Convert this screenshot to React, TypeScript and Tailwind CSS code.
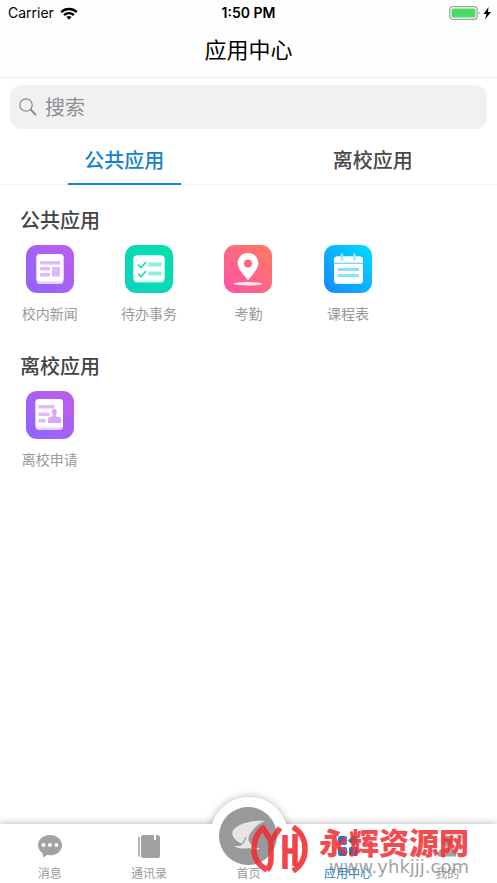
import { useState } from "react";
import type { ReactNode } from "react";

function Tile({ id, from, to, children }: { id: string; from: string; to: string; children: ReactNode }) {
  return (
    <svg viewBox="0 0 48 48" className="size-12" aria-hidden="true">
      <defs>
        <linearGradient id={id} x1="0" y1="1" x2="1" y2="0">
          <stop offset="0" stopColor={from} />
          <stop offset="1" stopColor={to} />
        </linearGradient>
      </defs>
      <rect width="48" height="48" rx="11" fill={`url(#${id})`} />
      {children}
    </svg>
  );
}

function NewsIcon() {
  return (
    <Tile id="news" from="#8b66ff" to="#c25cea">
      <rect x="10.500" y="9" width="27" height="30" rx="3.500" fill="#e6d3fb" />
      <rect x="10.500" y="9" width="27" height="27.500" rx="3.500" fill="#fff" />
      <g fill="#dfb9fa">
        <rect x="14" y="16" width="20" height="3.500" />
        <rect x="14" y="22" width="10" height="3.500" />
        <rect x="14" y="28" width="10" height="3.500" />
        <rect x="26" y="22" width="8" height="9.500" />
      </g>
    </Tile>
  );
}

function TodoIcon() {
  return (
    <Tile id="todo" from="#0cd3bd" to="#06e0ad">
      <rect x="8.500" y="10.500" width="31" height="27" rx="3.500" fill="#c4f7ec" />
      <rect x="8.500" y="10.500" width="31" height="25" rx="3.500" fill="#fff" />
      <g fill="#8cf0db">
        <rect x="23.500" y="17.500" width="13" height="4" />
        <rect x="23.500" y="26.500" width="13" height="4" />
      </g>
      <path d="M13 19.500l3 3 5-5.500M13 28.500l3 3 5-5.500" fill="none" stroke="#1cd9b9" strokeWidth="1.600" />
    </Tile>
  );
}

function PinIcon() {
  return (
    <Tile id="pin" from="#ff52a8" to="#ff7a60">
      <ellipse cx="24" cy="38.800" rx="14.500" ry="1.700" fill="#fff" fillOpacity=".85" />
      <path d="M24 8c-6 0-10.300 4.300-10.300 10 0 6.200 6 11.500 10.300 17.500C28.300 29.500 34.300 24.200 34.300 18 34.300 12.300 30 8 24 8Z" fill="#fff" />
      <circle cx="24" cy="18.500" r="4" fill="#ff6685" />
    </Tile>
  );
}

function CalendarIcon() {
  return (
    <Tile id="calendar" from="#1688ff" to="#00dcff">
      <rect x="10" y="11.500" width="29" height="27.500" rx="3.500" fill="#d6f3ff" />
      <rect x="10" y="11.500" width="29" height="26" rx="3.500" fill="#fff" />
      <path d="M10 18.300h29" stroke="#6bd0fb" strokeWidth="1.200" />
      <path d="M18 9.500v5M30.500 9.500v5" stroke="#9be8ff" strokeWidth="2.400" strokeLinecap="round" />
      <path d="M14 24.500h21M14 30.500h21" stroke="#8de1fb" strokeWidth="3.200" />
    </Tile>
  );
}

function ApplyIcon() {
  return (
    <Tile id="apply" from="#8b66ff" to="#c25cea">
      <rect x="9.500" y="8" width="27.500" height="31" rx="3.500" fill="#e6d3fb" />
      <rect x="9.500" y="8" width="27.500" height="28.500" rx="3.500" fill="#fff" />
      <g fill="#dfb9fa">
        <rect x="12.500" y="14" width="16" height="3.500" />
        <rect x="12.500" y="21.500" width="11" height="3.500" />
        <rect x="12.500" y="28" width="7" height="3.500" />
        <path d="M26.300 22.500a2.700 2.700 0 1 1 4 0c-.7 1-.8 2.300.4 3.200h1.900a2.500 2.500 0 0 1 2.500 2.500V32H22v-3.800a2.500 2.500 0 0 1 2.500-2.500h1.400c1.200-1 1.100-2.200.4-3.200Z" fill="#d6a8f5" />
      </g>
    </Tile>
  );
}

const sections = [
  {
    title: "公共应用",
    apps: [
      { name: "校内新闻", icon: <NewsIcon /> },
      { name: "待办事务", icon: <TodoIcon /> },
      { name: "考勤", icon: <PinIcon /> },
      { name: "课程表", icon: <CalendarIcon /> },
    ],
  },
  { title: "离校应用", apps: [{ name: "离校申请", icon: <ApplyIcon /> }] },
];

function StatusBar() {
  return (
    <div className="grid h-[26px] grid-cols-3 items-center px-2 font-['Inter',sans-serif] text-sm text-black">
      <div className="flex items-center gap-1.5">
        <span>Carrier</span>
        <svg viewBox="0 0 18 13" className="h-[13px] w-[18px]" aria-hidden="true">
          <g fill="none" stroke="#000" strokeWidth="2.400">
            <path d="M1.200 5.100a11.300 11.300 0 0 1 15.600 0" />
            <path d="M4.100 8.100a7 7 0 0 1 9.800 0" />
          </g>
          <path d="M9 12.800 6.400 10.100a3.800 3.800 0 0 1 5.200 0Z" />
        </svg>
      </div>
      <div className="text-center font-semibold">1:50 PM</div>
      <svg viewBox="0 0 44 14" className="-mr-1 h-[14px] w-[44px] justify-self-end" aria-hidden="true">
        <rect x=".7" y=".7" width="27.500" height="12.600" rx="3" fill="#fff" stroke="#9a9f9a" strokeWidth="1.200" />
        <rect x="2.500" y="2.500" width="24" height="9" rx="1.500" fill="#4cd964" />
        <path d="M29.700 5v4c1.300-.5 1.300-3.500 0-4Z" fill="#9a9f9a" />
        <path d="M39.500 1 34.500 8h3l-1.500 5.500L42 6h-3Z" />
      </svg>
    </div>
  );
}

function ChatIcon() {
  return (
    <svg viewBox="0 0 26 24" className="h-6 w-[26px]" aria-hidden="true">
      <path d="M13 1C6.300 1 1 5.500 1 11.200c0 3.300 1.800 6.200 4.700 8L6 23.500l4.300-2.500c.9.200 1.800.3 2.700.3 6.700 0 12-4.500 12-10.100S19.700 1 13 1Z" fill="#a2a2a2" />
      <g fill="#fff">
        <circle cx="6.500" cy="11" r="2" />
        <circle cx="13" cy="11" r="2" />
        <circle cx="19.500" cy="11" r="2" />
      </g>
    </svg>
  );
}

function BookIcon() {
  return (
    <svg viewBox="0 0 24 24" className="size-6" fill="#a2a2a2" aria-hidden="true">
      <path d="M1.200 3h1.600v19.500H1.200Z" />
      <path d="M6.500 1H17v5h2V1h1.500A2.500 2.500 0 0 1 23 3.500v18a2.500 2.500 0 0 1-2.500 2.500h-14A2.500 2.500 0 0 1 4 21.500v-18A2.500 2.500 0 0 1 6.500 1Z" />
    </svg>
  );
}

function AppsIcon() {
  return (
    <svg viewBox="0 0 24 24" className="size-6" fill="#1482cc" aria-hidden="true">
      <rect x="2" y="2" width="9" height="9" rx="2" />
      <rect x="2" y="13" width="9" height="9" rx="2" />
      <rect x="13" y="13" width="9" height="9" rx="2" />
      <path d="m17.500 1 5.500 5.500-5.500 5.500L12 6.500Z" />
    </svg>
  );
}

function PersonIcon() {
  return (
    <svg viewBox="0 0 24 24" className="size-6" fill="#a2a2a2" aria-hidden="true">
      <circle cx="12" cy="7" r="5.500" />
      <path d="M3 22.500V20c0-4 4-6 9-6s9 2 9 6v2.500Z" />
    </svg>
  );
}

function HomeEmblem() {
  return (
    <svg viewBox="0 0 58 58" className="size-[58px] shrink-0" aria-hidden="true">
      <circle cx="29" cy="29" r="29" fill="#999" />
      <path d="M46 14C34 13 21 16 15 22c-4 5-1 10 8 15 0 2-3 2-8 2 5 3 10 3 15 2 4 2 8 3 11 0-5 0-8-2-9-4-4-3-3-9 2-14 3-4 7-7 12-9Z" fill="#e5e5e5" />
      <path d="M23 37c2-2 3-4 4-7" fill="none" stroke="#999" strokeWidth="1.200" />
    </svg>
  );
}

function NavItem({ label, active = false, icon }: { label: string; active?: boolean; icon: ReactNode }) {
  return (
    <button type="button" className={`flex h-full flex-col items-center justify-between pt-2.5 pb-0.5 text-xs leading-4 ${active ? "text-[#1482cc]" : "text-[#999]"}`}>
      {icon}
      <span>{label}</span>
    </button>
  );
}

function BottomNav() {
  return (
    <nav className="relative h-[59px]">
      <div className="absolute -top-[27px] left-1/2 size-[78px] -translate-x-1/2 rounded-full bg-white shadow-[0_0_8px_rgba(0,0,0,0.3)]" />
      <div className="absolute inset-0 bg-white shadow-[0_0_8px_rgba(0,0,0,0.3)]" />
      <div className="absolute -top-[27px] left-1/2 size-[78px] -translate-x-1/2 rounded-full bg-white" />
      <div className="relative grid h-full grid-cols-5 grid-rows-1">
        <NavItem label="消息" icon={<ChatIcon />} />
        <NavItem label="通讯录" icon={<BookIcon />} />
        <button type="button" className="flex h-full flex-col items-center justify-end pb-0.5 text-xs leading-4 text-[#999]">
          <HomeEmblem />
          <span>首页</span>
        </button>
        <NavItem label="应用中心" active icon={<AppsIcon />} />
        <NavItem label="我的" icon={<PersonIcon />} />
      </div>
      <Watermark />
    </nav>
  );
}

function Watermark() {
  return (
    <div className="pointer-events-none absolute right-7 bottom-1.5 flex items-start gap-2.5">
      <svg viewBox="0 0 58 50" className="h-[50px] w-[58px]" fill="none" stroke="#f02a30" strokeOpacity=".88" strokeWidth="5.500" aria-hidden="true">
        <path d="M16 45C7 40 3 34 3 25 3 15 7 7 12 3L20 16 29 3M20 16v18c0 5-1 8-4 11" strokeLinejoin="round" />
        <path d="M34 10v34M44 9v32M34 26h10" />
        <path d="M42 2c8 5 12 12 12 22s-4 17-12 22" />
      </svg>
      <div className="flex flex-col">
        <span className="font-['Noto_Sans_CJK_SC',sans-serif] text-[30px] leading-8 font-black text-[#f23338]/90">永辉资源网</span>
        <span className="self-end font-['DejaVu_Sans',sans-serif] text-[18px] leading-5 text-[#888]/80">www.yhkjjj.com</span>
      </div>
    </div>
  );
}

export default function App() {
  const [tab, setTab] = useState(0);
  return (
    <div className="flex min-h-screen flex-col bg-white font-['Noto_Sans_CJK_SC',sans-serif]">
      <header className="border-b border-[#eee] bg-[#fefefe]">
        <StatusBar />
        <h1 className="pt-1.5 pb-3 text-center text-[22px] leading-[33px] text-black">应用中心</h1>
      </header>
      <label className="mx-2.5 mt-[7px] flex h-11 items-center gap-2 rounded-xl bg-[#f1f1f1] px-[9px]">
        <svg viewBox="0 0 18 18" className="size-[18px]" fill="none" stroke="#8c8c90" strokeWidth="1.300" aria-hidden="true">
          <circle cx="7" cy="7" r="6.200" />
          <path d="m11.500 11.500 5.500 5.500" strokeWidth="2" />
        </svg>
        <input type="search" aria-label="搜索" placeholder="搜索" className="min-w-0 flex-1 bg-transparent text-xl outline-none placeholder:text-[#8e8e93]" />
      </label>
      <div role="tablist" className="grid h-14 grid-cols-2 border-b border-[#f5f5f5]">
        {sections.map((s, i) => (
          <button
            key={s.title}
            type="button"
            role="tab"
            aria-selected={tab === i}
            onClick={() => setTab(i)}
            className={`-mb-px flex w-[113px] items-center justify-center justify-self-center border-b-2 pt-2 text-xl font-medium whitespace-nowrap ${tab === i ? "border-[#1482cc] text-[#1482cc]" : "border-transparent text-[#484848]"}`}
          >
            {s.title}
          </button>
        ))}
      </div>
      <main className="flex flex-1 flex-col gap-[26px] pt-5">
        {sections.map((s) => (
          <section key={s.title}>
            <h2 className="px-5 text-xl leading-[30px] font-medium text-[#444]">{s.title}</h2>
            <div className="mt-2.5 grid grid-cols-5">
              {s.apps.map((a) => (
                <button key={a.name} type="button" className="flex flex-col items-center gap-2 text-sm leading-6 text-[#999]">
                  {a.icon}
                  <span>{a.name}</span>
                </button>
              ))}
            </div>
          </section>
        ))}
      </main>
      <BottomNav />
    </div>
  );
}
